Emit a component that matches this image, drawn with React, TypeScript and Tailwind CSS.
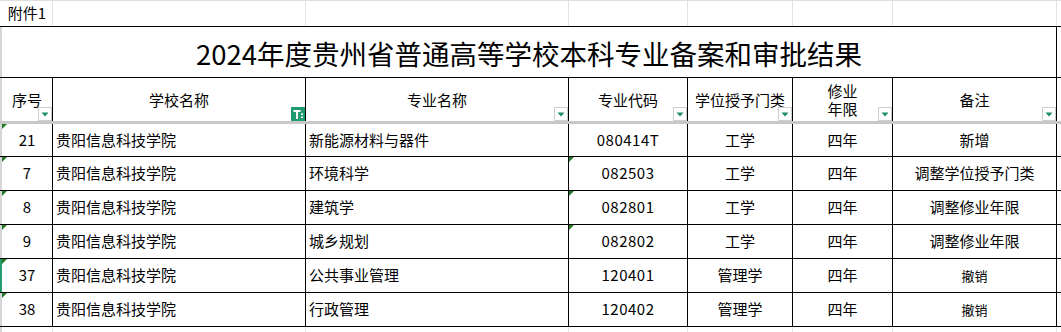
const widths = ["w-[53px]", "w-[253px]", "w-[263px]", "w-[119px]", "w-[105px]", "w-[100px]", "w-[164px]"];

const headers = ["序号", "学校名称", "专业名称", "专业代码", "学位授予门类", "修业年限", "备注"];

const rows = [
  { no: "21", name: "新能源材料与器件", code: "080414T", cat: "工学", years: "四年", note: "新增", codeMark: false },
  { no: "7", name: "环境科学", code: "082503", cat: "工学", years: "四年", note: "调整学位授予门类", codeMark: true },
  { no: "8", name: "建筑学", code: "082801", cat: "工学", years: "四年", note: "调整修业年限", codeMark: true },
  { no: "9", name: "城乡规划", code: "082802", cat: "工学", years: "四年", note: "调整修业年限", codeMark: true },
  { no: "37", name: "公共事业管理", code: "120401", cat: "管理学", years: "四年", note: "撤销", codeMark: false },
  { no: "38", name: "行政管理", code: "120402", cat: "管理学", years: "四年", note: "撤销", codeMark: false },
];

function CornerMark() {
  return (
    <svg className="absolute left-0 top-0" width="5" height="5" viewBox="0 0 5 5">
      <polygon points="0,0 5,0 0,5" fill="#247a24" />
    </svg>
  );
}

function FilterButton({ active }: { active?: boolean }) {
  if (active) {
    return (
      <div className="absolute bottom-0 right-0 h-[14px] w-[14px] bg-[#1e9b70]">
        <svg width="14" height="14" viewBox="0 0 14 14">
          <rect x="2.5" y="3" width="7" height="2" fill="#fff" />
          <rect x="5" y="5" width="2" height="7" fill="#fff" />
          <rect x="10" y="6.5" width="2" height="1.5" fill="#fff" />
          <rect x="10" y="9.5" width="2" height="1.5" fill="#fff" />
        </svg>
      </div>
    );
  }
  return (
    <div className="absolute bottom-0 right-0 flex h-[14px] w-[14px] items-center justify-center border border-[#cfcfcf] bg-white">
      <svg width="8" height="5" viewBox="0 0 8 5">
        <polygon points="0.5,0.5 7.5,0.5 4,4.5" fill="#1d8c5e" />
      </svg>
    </div>
  );
}

export default function App() {
  return (
    <div className="h-[332px] w-[1061px] overflow-hidden bg-white font-['Noto_Sans_CJK_SC',sans-serif] text-black">
      {/* 附件1 */}
      <div className="flex h-[27px] border-t border-b border-t-[#dedede] border-b-black">
        {widths.map((w, i) => (
          <div
            key={i}
            className={`${w} flex items-center border-r border-[#e2e2e2] ${i === 0 ? "justify-center pl-[2px] text-[15px]" : ""}`}
          >
            {i === 0 ? "附件1" : null}
          </div>
        ))}
      </div>

      {/* title */}
      <div className="flex h-[51px] border-b border-black">
        <div className="flex w-[1057px] items-center justify-center border-l-2 border-r border-l-[#d6d6d6] border-r-black pt-1 text-[27.5px] leading-none">
          2024年度贵州省普通高等学校本科专业备案和审批结果
        </div>
      </div>

      {/* header */}
      <div className="flex h-[46px] border-b-[3px] border-[#c8c8c8]">
        {headers.map((h, i) => (
          <div
            key={h}
            className={`${widths[i]} relative flex items-center justify-center border-r border-r-black text-[15px] ${i === 0 ? "border-l-2 border-l-[#d6d6d6]" : ""}`}
          >
            {h === "修业年限" ? (
              <div className="flex flex-col items-center leading-[18px]">
                <span>修业</span>
                <span>年限</span>
              </div>
            ) : (
              <span className="leading-none">{h}</span>
            )}
            <FilterButton active={i === 1} />
          </div>
        ))}
      </div>

      {/* data */}
      {rows.map((r, idx) => (
        <div key={r.no} className={`flex border-b border-black text-[15px] ${idx === 0 ? "h-[33px]" : "h-[34px]"}`}>
          <div
            className={`${widths[0]} relative flex items-center justify-center border-l-2 border-r border-r-black ${r.no === "37" ? "border-l-[#1f9d6c]" : "border-l-[#d6d6d6]"}`}
          >
            <CornerMark />
            {r.no}
          </div>
          <div className={`${widths[1]} flex items-center border-r border-black pl-[3px]`}>贵阳信息科技学院</div>
          <div className={`${widths[2]} flex items-center border-r border-black pl-[3px]`}>{r.name}</div>
          <div className={`${widths[3]} relative flex items-center justify-center border-r border-black tracking-[0.5px]`}>
            {r.codeMark ? <CornerMark /> : null}
            {r.code}
          </div>
          <div className={`${widths[4]} flex items-center justify-center border-r border-black`}>{r.cat}</div>
          <div className={`${widths[5]} flex items-center justify-center border-r border-black`}>{r.years}</div>
          <div
            className={`${widths[6]} flex items-center justify-center border-r border-black ${r.note === "撤销" ? "text-[13px]" : ""}`}
          >
            {r.note}
          </div>
        </div>
      ))}

      {/* empty grid below */}
      <div className="flex h-[6px]">
        {widths.map((w, i) => (
          <div key={i} className={`${w} border-r border-[#e2e2e2] ${i === 0 ? "border-l-2 border-l-[#d6d6d6]" : ""}`} />
        ))}
      </div>
    </div>
  );
}
